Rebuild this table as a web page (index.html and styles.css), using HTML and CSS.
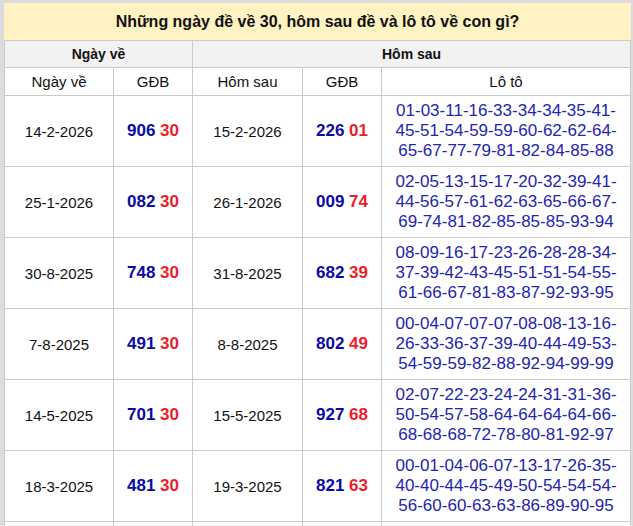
FILE: index.html
```html
<!DOCTYPE html>
<html lang="vi">
<head>
<meta charset="utf-8">
<title>Lô tô</title>
<link rel="stylesheet" href="styles.css">
</head>
<body>
<div class="frame">
<table class="kq">
<colgroup>
<col class="c1"><col class="c2"><col class="c3"><col class="c4"><col class="c5">
</colgroup>
<thead>
<tr><th class="title" colspan="5">Những ngày đề về 30, hôm sau đề và lô tô về con gì?</th></tr>
<tr class="h1"><th colspan="2">Ngày về</th><th colspan="3">Hôm sau</th></tr>
<tr class="h2"><td>Ngày về</td><td>GĐB</td><td>Hôm sau</td><td>GĐB</td><td>Lô tô</td></tr>
</thead>
<tbody>
<tr><td class="d">14-2-2026</td><td class="g"><b>906</b> <i>30</i></td><td class="d">15-2-2026</td><td class="g"><b>226</b> <i>01</i></td><td class="lt">01-03-11-16-33-34-34-35-41-<br>45-51-54-59-59-60-62-62-64-<br>65-67-77-79-81-82-84-85-88</td></tr>
<tr><td class="d">25-1-2026</td><td class="g"><b>082</b> <i>30</i></td><td class="d">26-1-2026</td><td class="g"><b>009</b> <i>74</i></td><td class="lt">02-05-13-15-17-20-32-39-41-<br>44-56-57-61-62-63-65-66-67-<br>69-74-81-82-85-85-85-93-94</td></tr>
<tr><td class="d">30-8-2025</td><td class="g"><b>748</b> <i>30</i></td><td class="d">31-8-2025</td><td class="g"><b>682</b> <i>39</i></td><td class="lt">08-09-16-17-23-26-28-28-34-<br>37-39-42-43-45-51-51-54-55-<br>61-66-67-81-83-87-92-93-95</td></tr>
<tr><td class="d">7-8-2025</td><td class="g"><b>491</b> <i>30</i></td><td class="d">8-8-2025</td><td class="g"><b>802</b> <i>49</i></td><td class="lt">00-04-07-07-07-08-08-13-16-<br>26-33-36-37-39-40-44-49-53-<br>54-59-59-82-88-92-94-99-99</td></tr>
<tr><td class="d">14-5-2025</td><td class="g"><b>701</b> <i>30</i></td><td class="d">15-5-2025</td><td class="g"><b>927</b> <i>68</i></td><td class="lt">02-07-22-23-24-24-31-31-36-<br>50-54-57-58-64-64-64-64-66-<br>68-68-68-72-78-80-81-92-97</td></tr>
<tr><td class="d">18-3-2025</td><td class="g"><b>481</b> <i>30</i></td><td class="d">19-3-2025</td><td class="g"><b>821</b> <i>63</i></td><td class="lt">00-01-04-06-07-13-17-26-35-<br>40-40-44-45-49-50-54-54-54-<br>56-60-60-63-63-86-89-90-95</td></tr>
<tr><td class="d">&nbsp;</td><td class="g">&nbsp;</td><td class="d">&nbsp;</td><td class="g">&nbsp;</td><td class="lt">&nbsp;<br>&nbsp;<br>&nbsp;</td></tr>
</tbody>
</table>
</div>
</body>
</html>
```

FILE: styles.css
```css
html, body {
  margin: 0;
  padding: 0;
  background: #ffffff;
}
body {
  font-family: "Liberation Sans", Arial, sans-serif;
  color: #111111;
}
.frame {
  background: #dcdcdc;
  padding: 3px 3px 0 4px;
  width: 626px;
  height: 526px;
  overflow: hidden;
}
.kq {
  border-collapse: collapse;
  table-layout: fixed;
  width: 626px;
  background: #ffffff;
}
.c1 { width: 109px; }
.c2 { width: 79px; }
.c3 { width: 110px; }
.c4 { width: 79px; }
.c5 { width: 249px; }
.kq th, .kq td {
  border: 1px solid #cbcbcb;
  text-align: center;
  padding: 0;
}
.kq .title {
  background: #fff2c3;
  height: 36px;
  font-size: 16px;
  font-weight: bold;
  border-color: #fff2c3;
  border-bottom-color: #cbcbcb;
}
.h1 th {
  background: #f2f2f2;
  height: 26px;
  font-size: 14px;
  font-weight: bold;
}
.h2 td {
  height: 27px;
  font-size: 15px;
}
tbody td {
  height: 70px;
}
.d {
  font-size: 15px;
}
.g {
  font-size: 17px;
  font-weight: bold;
}
.g b { color: #0a0aa6; }
.g i { color: #ee1d2a; font-style: normal; }
.lt {
  color: #2424b0;
  font-size: 17px;
  line-height: 20px;
}
```
